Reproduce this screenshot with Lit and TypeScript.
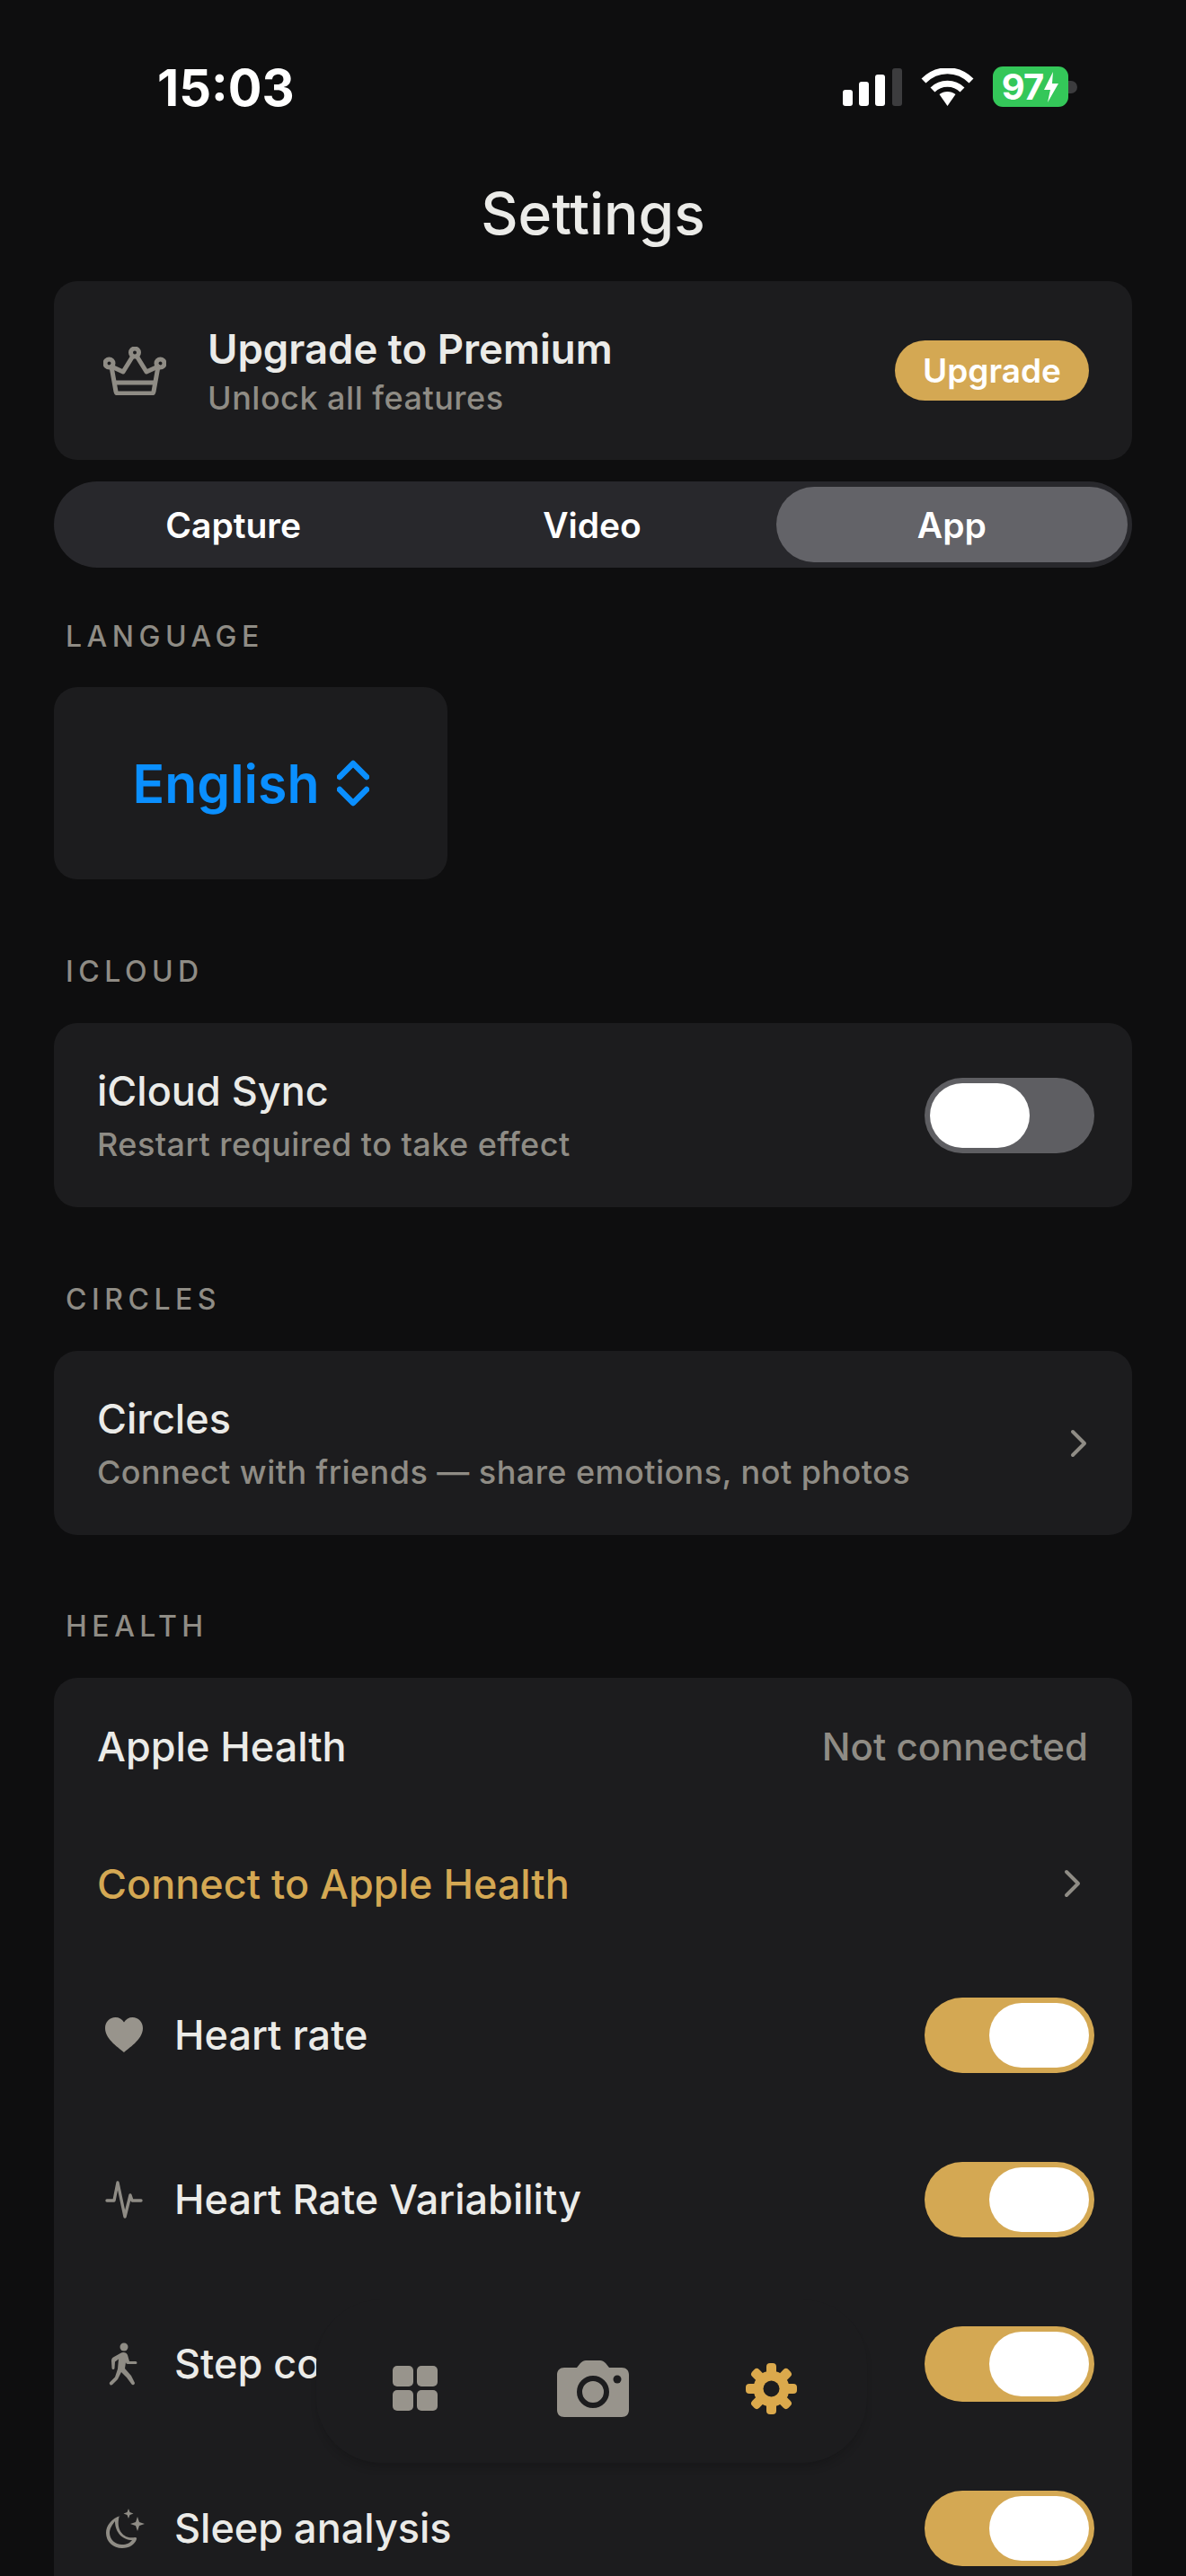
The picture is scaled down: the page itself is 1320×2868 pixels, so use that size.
import { LitElement, html, css, svg } from 'lit';
import { customElement } from 'lit/decorators.js';

const chevron = html`<svg class="chev" viewBox="0 0 22 32" fill="none" stroke="currentColor" stroke-width="4" stroke-linecap="round" stroke-linejoin="round"><path d="M4 3l13 13L4 29"></path></svg>`;

const crown = html`<svg class="crown" viewBox="0 0 70 54" fill="none" stroke="#8f8c85" stroke-width="5" stroke-linejoin="round" stroke-linecap="round">
  <circle cx="35" cy="6.500" r="4.500"></circle><circle cx="6.500" cy="18.500" r="4.500"></circle><circle cx="63.500" cy="18.500" r="4.500"></circle>
  <path d="M32.500 11L22 28 9 22"></path><path d="M37.500 11L48 28l13-6"></path>
  <path d="M9 22l5 28a2.500 2.500 0 002.500 2h37a2.500 2.500 0 002.500-2l5-28"></path>
  <path d="M13 40h44"></path>
</svg>`;

const heart = html`<svg class="ico" viewBox="0 0 42 40" fill="#98948c"><path d="M21 39C17 35 0 25 0 12 0 5 5 0 11.500 0 15.500 0 19 2 21 5.500 23 2 26.500 0 30.500 0 37 0 42 5 42 12 42 25 25 35 21 39Z"></path></svg>`;

const pulse = html`<svg class="ico" viewBox="0 0 42 44" fill="none" stroke="#8f8c85" stroke-width="3.400" stroke-linecap="round" stroke-linejoin="round"><path d="M2 23h8l4-20 8 38 6-24 2 6h10"></path></svg>`;

const walker = html`<svg class="ico" viewBox="0 0 42 48" fill="#8f8c85"><circle cx="21" cy="5" r="4.500"></circle><path d="M17 12c3-2 7-1 8 2l2 7h7a1.500 1.500 0 010 3h-9c-1 0-2-1-2-2l-1 7 7 8 4 8a2 2 0 01-3.500 1.500L24 39l-6-6-4 8-6 6a2 2 0 01-3-2.500l6-6 3-9 1-11-4 3-.5 7a1.500 1.500 0 01-3 0l-.5-8c0-1.500.5-3 2-4z"></path></svg>`;

const moon = html`<svg class="ico wide" viewBox="0 0 44 46"><path fill="#8f8c85" fill-rule="evenodd" d="M17 9C7 12 1 20 1 28c0 10 8 17 18 17 8 0 14-4 16-10 .5-1.500-.5-2-2-2C22 35 13 27 15 13c.3-2 .5-4.500 2-4zM11 15C8 19 5 23 5 28c0 7 6 13 14 13 5 0 9-2 11-5C20 36 11 28 11 15z"></path><path fill="#8f8c85" d="M26 1l1.500 4 4 1.500-4 1.500-1.500 4-1.500-4-4-1.500 4-1.500zM36 10l2 6 6 2-6 2-2 6-2-6-6-2 6-2z"></path></svg>`;

const gearTeeth = [0, 45, 90, 135, 180, 225, 270, 315].map(
  (deg) => svg`<rect x="23" y="0" width="11" height="16" rx="4" transform="rotate(${deg} 28.500 28.500)"></rect>`
);

@customElement('app-toggle')
export class AppToggle extends LitElement {
  static properties = { on: { type: Boolean } };
  on = false;

  static styles = css`
    :host {
      display: block;
    }
    .track {
      display: flex;
      width: 189px;
      height: 84px;
      box-sizing: border-box;
      padding: 6px;
      border-radius: 42px;
      background: #5e5e62;
    }
    .track.on {
      justify-content: flex-end;
      background: #d4a853;
    }
    .knob {
      width: 111px;
      height: 72px;
      border-radius: 36px;
      background: #fff;
    }
  `;

  render() {
    return html`<div class="track ${this.on ? 'on' : ''}"><div class="knob"></div></div>`;
  }
}

@customElement('app-root')
export class AppRoot extends LitElement {
  static styles = css`
    :host {
      display: block;
      position: relative;
      height: 2868px;
      overflow: hidden;
      background: #0e0e0f;
      font-family: Inter, 'Liberation Sans', sans-serif;
      color: #ebebe8;
    }

    .status {
      display: flex;
      align-items: flex-start;
      justify-content: space-between;
      height: 198px;
      box-sizing: border-box;
      padding: 67px 121px 0 175px;
    }
    .time {
      font-size: 56px;
      line-height: 62px;
      font-weight: 700;
      color: #fff;
    }
    .status-icons {
      display: flex;
      align-items: center;
      gap: 21px;
      padding-top: 7px;
    }
    .signal {
      width: 66px;
      height: 42px;
    }
    .wifi {
      width: 59px;
      height: 42px;
    }
    .battery {
      display: flex;
      align-items: center;
    }
    .cell {
      display: flex;
      align-items: center;
      justify-content: center;
      width: 84px;
      height: 45px;
      border-radius: 11px;
      background: #34c759;
      color: #fff;
      font-size: 40px;
      font-weight: 700;
      letter-spacing: -1px;
    }
    .bolt {
      width: 18px;
      height: 34px;
    }
    .cap {
      width: 10px;
      height: 14px;
      border-radius: 0 7px 7px 0;
      background: #3c3c3e;
    }

    h1 {
      margin: 0;
      text-align: center;
      font-size: 64px;
      line-height: 80px;
      font-weight: 500;
    }

    .card {
      margin: 0 60px;
      border-radius: 26px;
      background: #1c1c1e;
    }

    .promo {
      display: flex;
      align-items: center;
      height: 199px;
      margin-top: 35px;
      padding: 0 48px 0 55px;
    }
    .crown {
      width: 70px;
      height: 54px;
      margin-right: 46px;
    }
    .promo-text {
      flex: 1;
    }
    .promo-title {
      font-size: 45.500px;
      line-height: 54px;
      font-weight: 600;
    }
    .promo-sub {
      margin-top: 6px;
      font-size: 36px;
      line-height: 42px;
      font-weight: 500;
      letter-spacing: 0.500px;
      color: #8f8c85;
    }
    .upgrade {
      display: flex;
      align-items: center;
      justify-content: center;
      width: 216px;
      height: 67px;
      border-radius: 34px;
      background: #d4a853;
      color: #fff;
      font-size: 37px;
      font-weight: 600;
    }

    .tabs {
      display: grid;
      grid-template-columns: repeat(3, 1fr);
      height: 96px;
      margin: 24px 60px 0;
      padding-right: 2px;
      border-radius: 48px;
      background: #28282c;
    }
    .tab {
      display: flex;
      align-items: center;
      justify-content: center;
      color: #fff;
      font-size: 39px;
      font-weight: 600;
    }
    .tab.active {
      margin: 6px 3px 6px 5px;
      border-radius: 42px;
      background: #636368;
    }

    .label {
      margin: 83px 0 37px;
      padding-left: 73px;
      font-size: 32px;
      line-height: 40px;
      letter-spacing: 5.500px;
      font-weight: 500;
      color: #8f8c85;
    }
    .label.first {
      margin: 57px 0 36px;
    }
    .label.last {
      margin-top: 82px;
    }

    .language {
      display: flex;
      align-items: center;
      justify-content: center;
      gap: 19px;
      width: 438px;
      height: 214px;
      color: #0a8fff;
      font-size: 59px;
      font-weight: 600;
    }
    .updown {
      width: 36px;
      height: 52px;
    }

    .row {
      display: flex;
      align-items: center;
      justify-content: space-between;
      height: 205px;
      padding: 0 42px 0 48px;
    }
    .row-title {
      font-size: 45px;
      line-height: 56px;
      font-weight: 500;
    }
    .row-sub {
      margin-top: 9px;
      font-size: 36px;
      line-height: 44px;
      font-weight: 500;
      letter-spacing: 0.450px;
      color: #8f8c85;
    }
    .chev {
      width: 22px;
      height: 32px;
      margin-right: 6px;
      color: #8f8c85;
    }

    .health {
      height: 1100px;
    }
    .h-row {
      display: flex;
      align-items: center;
      justify-content: space-between;
      height: 154px;
      padding: 0 49px 0 48px;
      font-size: 45px;
      font-weight: 500;
    }
    .h-row.head {
      height: 152px;
    }
    .h-row.metric {
      height: 183px;
      padding: 0 42px 0 57px;
    }
    .muted {
      font-size: 42px;
      color: #8f8c85;
    }
    .gold {
      color: #d4a853;
    }
    .with-icon {
      display: flex;
      align-items: center;
      gap: 35px;
    }
    .ico {
      width: 42px;
      height: 48px;
    }
    .ico.wide {
      width: 44px;
      margin-right: -2px;
    }

    .nav {
      position: absolute;
      left: 352px;
      top: 2560px;
      display: flex;
      align-items: center;
      width: 613px;
      height: 182px;
      box-sizing: border-box;
      padding-top: 16px;
      border-radius: 72px;
      background: #1c1c1e;
      box-shadow: 0 8px 10px -4px rgba(14, 14, 14, 0.3);
    }
    .nav-grid {
      width: 50px;
      height: 50px;
      margin-left: 85px;
    }
    .nav-cam {
      width: 80px;
      height: 63px;
      margin-left: 133px;
    }
    .nav-gear {
      width: 57px;
      height: 57px;
      margin-left: 130px;
    }
  `;

  render() {
    return html`
      <div class="status">
        <div class="time">15:03</div>
        <div class="status-icons">
          <svg class="signal" viewBox="0 0 66 42">
            <rect x="0" y="24" width="11" height="18" rx="3" fill="#fff"></rect>
            <rect x="18" y="15" width="11" height="27" rx="3" fill="#fff"></rect>
            <rect x="36" y="7" width="11" height="35" rx="3" fill="#fff"></rect>
            <rect x="55" y="0" width="11" height="42" rx="3" fill="#3c3c3e"></rect>
          </svg>
          <svg class="wifi" viewBox="0 0 59 42" fill="none" stroke="#fff" stroke-width="7">
            <path d="M3 14C18 -1 41 -1 56 14"></path>
            <path d="M13 24C22 15 37 15 46 24"></path>
            <path fill="#fff" stroke="none" d="M29.500 42l-9-13c5-4 13-4 18 0z"></path>
          </svg>
          <div class="battery">
            <div class="cell">97<svg class="bolt" viewBox="0 0 18 34" fill="#fff"><path d="M11 0L1 20h7L5 34l12-21h-7z"></path></svg></div>
            <div class="cap"></div>
          </div>
        </div>
      </div>

      <h1>Settings</h1>

      <div class="card promo">
        ${crown}
        <div class="promo-text">
          <div class="promo-title">Upgrade to Premium</div>
          <div class="promo-sub">Unlock all features</div>
        </div>
        <div class="upgrade">Upgrade</div>
      </div>

      <div class="tabs">
        <div class="tab">Capture</div>
        <div class="tab">Video</div>
        <div class="tab active">App</div>
      </div>

      <div class="label first">LANGUAGE</div>
      <div class="card language">
        English
        <svg class="updown" viewBox="0 0 36 52" fill="none" stroke="currentColor" stroke-width="6.500" stroke-linecap="round" stroke-linejoin="round">
          <path d="M3 19L18 4l15 15"></path><path d="M3 33l15 15 15-15"></path>
        </svg>
      </div>

      <div class="label">ICLOUD</div>
      <div class="card row">
        <div>
          <div class="row-title">iCloud Sync</div>
          <div class="row-sub">Restart required to take effect</div>
        </div>
        <app-toggle></app-toggle>
      </div>

      <div class="label">CIRCLES</div>
      <div class="card row">
        <div>
          <div class="row-title">Circles</div>
          <div class="row-sub">Connect with friends — share emotions, not photos</div>
        </div>
        ${chevron}
      </div>

      <div class="label last">HEALTH</div>
      <div class="card health">
        <div class="h-row head"><span>Apple Health</span><span class="muted">Not connected</span></div>
        <div class="h-row"><span class="gold">Connect to Apple Health</span>${chevron}</div>
        <div class="h-row metric"><span class="with-icon">${heart}Heart rate</span><app-toggle on></app-toggle></div>
        <div class="h-row metric"><span class="with-icon">${pulse}Heart Rate Variability</span><app-toggle on></app-toggle></div>
        <div class="h-row metric"><span class="with-icon">${walker}Step count</span><app-toggle on></app-toggle></div>
        <div class="h-row metric"><span class="with-icon">${moon}Sleep analysis</span><app-toggle on></app-toggle></div>
      </div>

      <nav class="nav">
        <svg class="nav-grid" viewBox="0 0 50 50" fill="#98948c">
          <rect x="0" y="0" width="23" height="23" rx="5"></rect>
          <rect x="27" y="0" width="23" height="23" rx="5"></rect>
          <rect x="0" y="27" width="23" height="23" rx="5"></rect>
          <rect x="27" y="27" width="23" height="23" rx="5"></rect>
        </svg>
        <svg class="nav-cam" viewBox="0 0 80 63">
          <path fill="#98948c" d="M8 8h14l4-5c2-2 4-3 6-3h16c2 0 4 1 6 3l4 5h14c5 0 8 3 8 8v39c0 5-3 8-8 8H8c-5 0-8-3-8-8V16c0-5 3-8 8-8z"></path>
          <circle cx="40" cy="35" r="15" fill="none" stroke="#1c1c1e" stroke-width="6"></circle>
          <circle cx="67" cy="21" r="4.500" fill="#1c1c1e"></circle>
        </svg>
        <svg class="nav-gear" viewBox="0 0 57 57">
          <g fill="#dba94c">
            ${gearTeeth}
            <circle cx="28.500" cy="28.500" r="20"></circle>
          </g>
          <circle cx="28.500" cy="28.500" r="9" fill="#1c1c1e"></circle>
        </svg>
      </nav>
    `;
  }
}
